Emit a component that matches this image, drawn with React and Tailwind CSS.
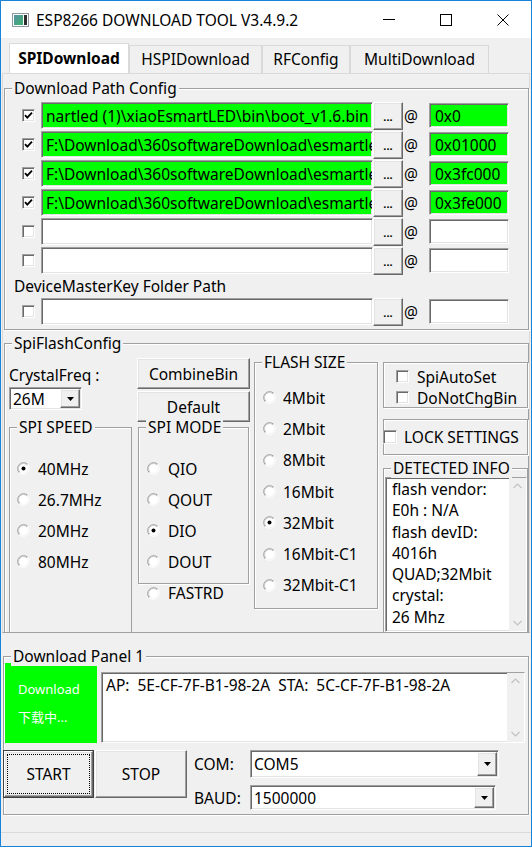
import React from 'react';

const sunken = 'border border-t-[#a0a0a0] border-l-[#a0a0a0] border-b-white border-r-white shadow-[inset_1px_1px_0_#696969,inset_-1px_-1px_0_#e3e3e3]';
const raised = 'border border-t-white border-l-white border-b-[#696969] border-r-[#696969] shadow-[inset_-1px_-1px_0_#a0a0a0,inset_1px_1px_0_#e3e3e3] bg-[#f0f0f0]';
const etched = 'border border-[#a0a0a0] shadow-[inset_1px_1px_0_#fff,1px_1px_0_#fff]';

const GroupBox = ({ label, className = '', children }) => (
  <div className={`relative ${etched} ${className}`}>
    {label && (
      <span className="absolute left-[7px] -top-[11px] bg-[#f0f0f0] px-[2px] leading-[20px] whitespace-nowrap">
        {label}
      </span>
    )}
    {children}
  </div>
);

const Check = ({ checked, className = '' }) => (
  <div className={`w-[13px] h-[13px] shrink-0 bg-white ${sunken} flex items-center justify-center ${className}`}>
    {checked && (
      <svg width="9" height="9" viewBox="0 0 9 9">
        <path d="M1 4.2 L3.3 6.6 L8 1.6" fill="none" stroke="#000" strokeWidth="1.8" />
      </svg>
    )}
  </div>
);

const RadioDot = ({ checked }) => (
  <svg width="13" height="13" viewBox="0 0 13 13" className="shrink-0">
    <circle cx="6.5" cy="6.5" r="5.5" fill="#fff" />
    <path d="M2.26 10.74 A6 6 0 0 1 10.74 2.26" fill="none" stroke="#a0a0a0" />
    <path d="M10.74 2.26 A6 6 0 0 1 2.26 10.74" fill="none" stroke="#fff" />
    <path d="M2.96 10.04 A5 5 0 0 1 10.04 2.96" fill="none" stroke="#c4c4c4" />
    <path d="M10.04 2.96 A5 5 0 0 1 2.96 10.04" fill="none" stroke="#f4f4f4" />
    {checked && <circle cx="6.5" cy="6.5" r="2" fill="#000" />}
  </svg>
);

const Radio = ({ label, checked, h = 'h-[31px]', gap = 'ml-[8px]' }) => (
  <div className={`${h} flex items-center`}>
    <RadioDot checked={checked} />
    <span className={gap}>{label}</span>
  </div>
);

const Tri = () => (
  <svg width="7" height="4" viewBox="0 0 7 4">
    <path d="M0 0 H7 L3.5 4 Z" fill="#000" />
  </svg>
);

const Combo = ({ value, className = '' }) => (
  <div className={`${sunken} bg-white flex ${className}`}>
    <span className="flex-1 flex items-center pl-[3px]">{value}</span>
    <div className={`${raised} w-[20px] m-[1px] flex items-center justify-center`}>
      <Tri />
    </div>
  </div>
);

const PathRow = ({ checked, path, addr }) => {
  const fill = checked ? 'bg-[#00ff00]' : 'bg-white';
  return (
    <div className="h-[29px] flex items-center pl-[17px]">
      <Check checked={checked} />
      <div className={`ml-[6px] w-[332px] h-[27px] ${sunken} ${fill} flex items-center pl-[4px] overflow-hidden whitespace-nowrap`}>
        {path}
      </div>
      <div className={`${raised} w-[30px] h-[28px] flex items-center justify-center text-[11px] font-bold pt-[3px]`}>...</div>
      <span className="w-[26px] pl-[1px]">@</span>
      <div className={`w-[80px] h-[25px] ${sunken} ${fill} flex items-center pl-[5px]`}>{addr}</div>
    </div>
  );
};

const Chevron = ({ up }) => (
  <svg width="9" height="6" viewBox="0 0 9 6">
    <path d={up ? 'M0.5 5 L4.5 1 L8.5 5' : 'M0.5 1 L4.5 5 L8.5 1'} fill="none" stroke="#c2c2c2" strokeWidth="1.2" />
  </svg>
);

const ScrollBar = () => (
  <div className="w-[17px] bg-[#f0f0f0] flex flex-col justify-between items-center py-[5px]">
    <Chevron up />
    <Chevron />
  </div>
);

const AppIcon = () => (
  <svg width="17" height="14" viewBox="0 0 17 14" className="ml-[11px] shrink-0">
    <defs>
      <linearGradient id="ig" x1="0" y1="0" x2="1" y2="1">
        <stop offset="0" stopColor="#5b8fa6" />
        <stop offset="1" stopColor="#39b36a" />
      </linearGradient>
    </defs>
    <rect x="0.5" y="0.5" width="16" height="13" fill="#fff" stroke="#8c9aa0" />
    <rect x="2" y="2" width="9" height="10" fill="url(#ig)" />
    <rect x="12" y="2" width="3" height="10" fill="#2e2e2e" />
  </svg>
);

const tabs = [
  { name: 'SPIDownload', w: 'w-[120px]', active: true },
  { name: 'HSPIDownload', w: 'w-[133px]' },
  { name: 'RFConfig', w: 'w-[88px]' },
  { name: 'MultiDownload', w: 'w-[139px]' },
];

const restPath = 'F:\\Download\\360softwareDownload\\esmartle';

export default function App() {
  return (
    <div className="w-[532px] h-[847px] border border-[#1883d7] bg-[#f0f0f0] flex flex-col text-[15.5px] text-black font-['Noto_Sans','Noto_Sans_CJK_SC',sans-serif] overflow-hidden leading-[20px]">
      {/* title bar */}
      <div className="h-[37px] bg-white flex items-center shrink-0">
        <AppIcon />
        <span className="ml-[7px]">ESP8266 DOWNLOAD TOOL V3.4.9.2</span>
        <div className="ml-auto flex h-full">
          <div className="w-[57px] flex items-center justify-center">
            <div className="w-[12px] h-px bg-black" />
          </div>
          <div className="w-[57px] flex items-center justify-center">
            <div className="w-[12px] h-[12px] border border-black" />
          </div>
          <div className="w-[57px] flex items-center justify-center">
            <svg width="12" height="12" viewBox="0 0 12 12">
              <path d="M0.5 0.5 L11.5 11.5 M11.5 0.5 L0.5 11.5" stroke="#000" strokeWidth="1" />
            </svg>
          </div>
        </div>
      </div>

      {/* tabs */}
      <div className="h-[35px] flex items-end pl-[8px] shrink-0">
        {tabs.map((t) => (
          <div
            key={t.name}
            className={`${t.w} ${t.active ? 'h-[30px] bg-white font-bold' : 'h-[28px] bg-[#f0f0f0]'} border border-b-0 border-[#d9d9d9] flex items-center justify-center pb-[2px]`}
          >
            {t.name}
          </div>
        ))}
      </div>

      {/* tab page */}
      <div className="ml-[1px] w-[528px] h-[560px] shrink-0 border border-[#d9d9d9] border-b-[#a0a0a0] flex flex-col">
        <GroupBox label="Download Path Config" className="mt-[14px] ml-[1px] w-[525px] pt-[12px] pb-[3px]">
          <PathRow checked path="nartled (1)\xiaoEsmartLED\bin\boot_v1.6.bin" addr="0x0" />
          <PathRow checked path={restPath} addr="0x01000" />
          <PathRow checked path={restPath} addr="0x3fc000" />
          <PathRow checked path={restPath} addr="0x3fe000" />
          <PathRow path="" addr="" />
          <PathRow path="" addr="" />
          <div className="h-[22px] flex items-center pl-[9px]">DeviceMasterKey Folder Path</div>
          <PathRow path="" addr="" />
        </GroupBox>

        <GroupBox label="SpiFlashConfig" className="mt-[13px] ml-[1px] w-[525px] flex-1 flex border-b-0 shadow-[inset_1px_1px_0_#fff]">
          {/* column A */}
          <div className="ml-[4px] w-[123px] flex flex-col">
            <div className="mt-[21px] h-[20px] flex items-center">CrystalFreq :</div>
            <Combo value="26M" className="mt-[2px] w-[73px] h-[23px]" />
            <GroupBox label="SPI SPEED" className="mt-[17px] flex-1 border-b-0 shadow-[inset_1px_1px_0_#fff] pt-[25px] pl-[7px]">
              <Radio label="40MHz" checked />
              <Radio label="26.7MHz" />
              <Radio label="20MHz" />
              <Radio label="80MHz" />
            </GroupBox>
          </div>

          {/* column B */}
          <div className="ml-[5px] w-[113px] flex flex-col">
            <div className={`${raised} mt-[14px] h-[31px] flex items-center justify-center`}>CombineBin</div>
            <div className={`${raised} mt-[2px] h-[31px] flex items-center justify-center`}>Default</div>
            <GroupBox label="SPI MODE" className="mt-[5px] mx-[1px] h-[157px] pt-[25px] pl-[8px]">
              <Radio label="QIO" />
              <Radio label="QOUT" />
              <Radio label="DIO" checked />
              <Radio label="DOUT" />
            </GroupBox>
            <div className="pl-[10px]">
              <Radio label="FASTRD" h="h-[18px]" />
            </div>
          </div>

          {/* column C */}
          <div className="ml-[4px] w-[124px] flex flex-col">
            <GroupBox label="FLASH SIZE" className="mt-[18px] h-[247px] pt-[19px] pl-[8px]">
              {['4Mbit', '2Mbit', '8Mbit', '16Mbit', '32Mbit', '16Mbit-C1', '32Mbit-C1'].map((s) => (
                <Radio key={s} label={s} checked={s === '32Mbit'} h="h-[31.3px]" gap="ml-[7px]" />
              ))}
            </GroupBox>
          </div>

          {/* column D */}
          <div className="ml-[5px] w-[145px] flex flex-col">
            <GroupBox className="mt-[18px] h-[46px] pt-[3px] pl-[12px]">
              <div className="h-[21px] flex items-center">
                <Check />
                <span className="ml-[8px]">SpiAutoSet</span>
              </div>
              <div className="h-[21px] flex items-center">
                <Check />
                <span className="ml-[8px]">DoNotChgBin</span>
              </div>
            </GroupBox>
            <GroupBox className="mt-[11px] h-[36px] flex items-center">
              <Check className="-ml-px w-[14px] h-[14px]" />
              <span className="ml-[7px]">LOCK SETTINGS</span>
            </GroupBox>
            <GroupBox label="DETECTED INFO" className="mt-[13px] flex-1 border-b-0 shadow-[inset_1px_1px_0_#fff] pt-[8px] pl-px flex flex-col">
              <div className={`flex-1 ${sunken} bg-white flex`}>
                <div className="flex-1 pl-[6px] pt-[1px] leading-[21.3px]">
                  <div>flash vendor:</div>
                  <div>E0h : N/A</div>
                  <div>flash devID:</div>
                  <div>4016h</div>
                  <div>QUAD;32Mbit</div>
                  <div>crystal:</div>
                  <div>26 Mhz</div>
                </div>
                <ScrollBar />
              </div>
            </GroupBox>
          </div>
        </GroupBox>
      </div>

      {/* download panel */}
      <GroupBox label="Download Panel 1" className="mt-[23px] ml-[2px] w-[526px] shrink-0 pt-[6px] pb-[4px]">
        <div className="flex items-start pl-px">
          <div className="w-[92px] h-[80px] bg-[#00ff00] text-white text-[13px] flex flex-col pl-[13px] pt-[12px] leading-[28px]">
            <span>Download</span>
            <span>下载中...</span>
          </div>
          <div className={`ml-[4px] mt-[9px] w-[424px] h-[71px] ${sunken} bg-white flex`}>
            <div className="flex-1 pl-[4px] pt-[1px] leading-[22px] whitespace-pre">AP:  5E-CF-7F-B1-98-2A  STA:  5C-CF-7F-B1-98-2A</div>
            <ScrollBar />
          </div>
        </div>
        <div className="mt-[7px] flex items-start">
          <div className="-ml-px w-[91px] h-[48px] border border-[#404040] flex">
            <div className={`${raised} flex-1 flex`}>
              <div className="flex-1 m-[2px] border border-dotted border-black flex items-center justify-center">START</div>
            </div>
          </div>
          <div className={`${raised} ml-px w-[92px] h-[48px] flex items-center justify-center`}>STOP</div>
          <div className="ml-[7px] w-[56px] flex flex-col">
            <div className="h-[28px] flex items-center">COM:</div>
            <div className="mt-[7px] h-[25px] flex items-center">BAUD:</div>
          </div>
          <div className="flex flex-col">
            <Combo value="COM5" className="w-[249px] h-[28px]" />
            <Combo value="1500000" className="mt-[7px] w-[246px] h-[25px]" />
          </div>
        </div>
      </GroupBox>

      {/* status bar */}
      <div className="mt-[17px] flex-1 border-t border-[#dadada]" />
    </div>
  );
}
